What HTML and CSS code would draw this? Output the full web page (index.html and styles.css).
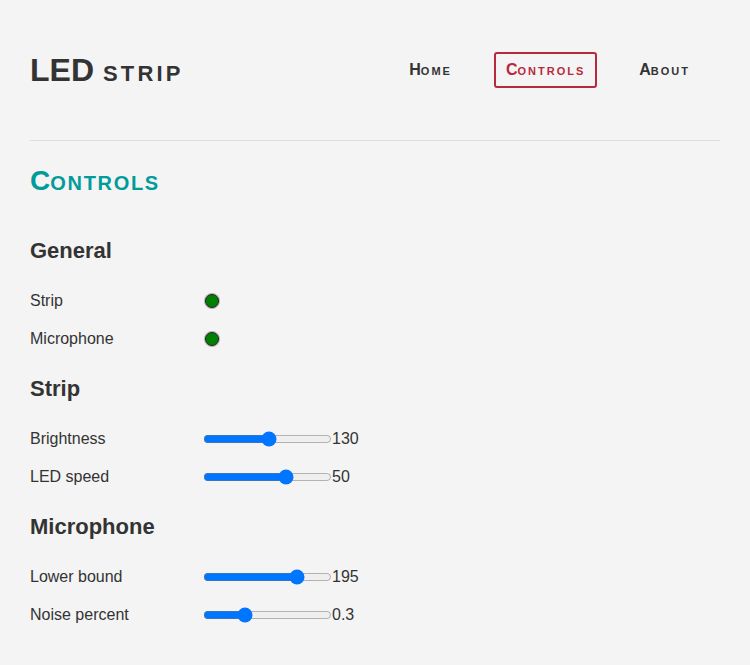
FILE: index.html
```html
<!DOCTYPE html>
<html>
<head>
<meta charset="utf-8">
<link rel="stylesheet" href="styles.css">
</head>
<body>
<div class="page">
  <header class="header">
    <h1 class="logo">LED <span class="sc">strip</span></h1>
    <nav class="nav">
      <a class="nav-link">H<span class="sc">ome</span></a>
      <a class="nav-link active">C<span class="sc">ontrols</span></a>
      <a class="nav-link">A<span class="sc">bout</span></a>
    </nav>
  </header>
  <main class="main">
    <h2 class="title">C<span class="sc">ontrols</span></h2>

    <h3 class="section">General</h3>
    <div class="row"><span class="label">Strip</span><span class="dot"></span></div>
    <div class="row"><span class="label">Microphone</span><span class="dot"></span></div>

    <h3 class="section">Strip</h3>
    <div class="row"><span class="label">Brightness</span><input class="range" type="range" min="0" max="255" value="130"><span class="value">130</span></div>
    <div class="row"><span class="label">LED speed</span><input class="range" type="range" min="0" max="75" value="50"><span class="value">50</span></div>

    <h3 class="section">Microphone</h3>
    <div class="row"><span class="label">Lower bound</span><input class="range" type="range" min="0" max="255" value="195"><span class="value">195</span></div>
    <div class="row"><span class="label">Noise percent</span><input class="range" type="range" min="0" max="1" step="0.1" value="0.3"><span class="value">0.3</span></div>
  </main>
</div>
</body>
</html>
```
FILE: styles.css
```css
html, body {
  margin: 0;
  padding: 0;
  background: #f4f4f4;
  color: #333;
  font-family: "Liberation Sans", Arial, sans-serif;
}
.page {
  padding: 0 30px;
}
.header {
  height: 140px;
  display: flex;
  align-items: center;
  justify-content: space-between;
  border-bottom: 1px solid #dcdcdc;
}
.logo {
  margin: 0;
  font-size: 32px;
  font-weight: bold;
  font-variant: small-caps;
  line-height: 36px;
  color: #333;
}
.logo .sc {
  letter-spacing: 3.2px;
}
.nav {
  display: flex;
  gap: 30px;
  margin-right: 18px;
}
.nav-link {
  font-size: 16px;
  font-weight: bold;
  font-variant: small-caps;
  line-height: 20px;
  padding: 6px 10px;
  border: 2px solid transparent;
  border-radius: 3px;
  color: #333;
}
.nav-link .sc {
  letter-spacing: 2px;
}
.nav-link.active {
  color: #b8293d;
  border-color: #b8293d;
}
.main {
  padding-top: 24px;
}
.title {
  margin: 0 0 41px 0;
  font-size: 28px;
  line-height: 32px;
  font-variant: small-caps;
  font-weight: bold;
  color: #009b9b;
}
.title .sc {
  letter-spacing: 1.7px;
}
.section {
  margin: 0 0 18px 0;
  font-size: 22px;
  line-height: 26px;
  font-weight: bold;
}
.row {
  display: flex;
  align-items: center;
  height: 38px;
  font-size: 16px;
}
.row + .section {
  margin-top: 18px;
}
.label {
  width: 171px;
  flex: none;
}
.dot {
  width: 12px;
  height: 12px;
  margin-left: 4px;
  border-radius: 50%;
  background: #008000;
  border: 1px solid #262626;
  box-shadow: 0 0 0 1px rgba(60, 60, 60, 0.35);
}
.range {
  width: 129px;
  margin: 0 0 0 2px;
}
.value {
  font-size: 16px;
}
```
